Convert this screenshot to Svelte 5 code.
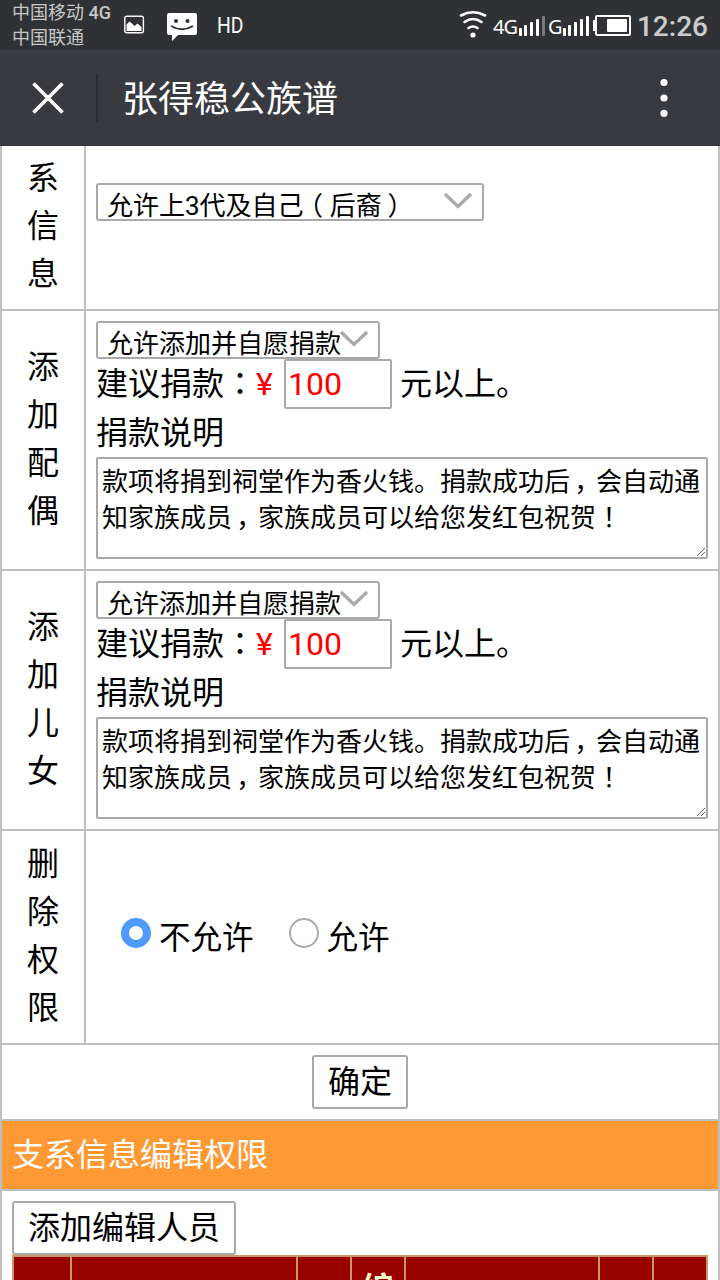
<script lang="ts">
	interface Permission {
		label: string;
		option: string;
		amount: number;
		note: string[];
	}

	const note = ['款项将捐到祠堂作为香火钱。捐款成功后，会自动通', '知家族成员，家族成员可以给您发红包祝贺！'];

	const permissions: Permission[] = [
		{ label: '添加配偶', option: '允许添加并自愿捐款', amount: 100, note },
		{ label: '添加儿女', option: '允许添加并自愿捐款', amount: 100, note }
	];

	const columns = ['', '', '', '编', '', '', ''];

	let allowDelete = $state(false);

	// full-width marks sit in the middle of their em box
	function chunks(text: string) {
		return text.split(/([，：！（）])/).filter((t) => t !== '');
	}

	function markClass(t: string) {
		if (t === '，') return 'comma';
		if (t === '：' || t === '！') return 'centered';
		if (t === '（') return 'open';
		if (t === '）') return 'close';
		return '';
	}
</script>

{#snippet cjk(text: string)}
	{#each chunks(text) as t}<span class={markClass(t)}>{t}</span>{/each}
{/snippet}

{#snippet select(text: string, wide: boolean)}
	<div class="select" class:wide>
		<span class="select-text">{@render cjk(text)}</span>
		<svg class="chevron" width="30" height="18" viewBox="0 0 30 18">
			<path d="M2 2 L15 14.5 L28 2" fill="none" stroke="#aaa" stroke-width="3.4" />
		</svg>
	</div>
{/snippet}

{#snippet label(text: string)}
	<div class="label">
		{#each [...text] as char}
			<span>{char}</span>
		{/each}
	</div>
{/snippet}

{#snippet signal(last: string)}
	<svg class="signal" width="30" height="22" viewBox="0 0 30 22" fill="#fff">
		<rect x="1" y="13" width="3" height="8" rx="1" />
		<rect x="6" y="10" width="3" height="11" rx="1" />
		<rect x="12" y="7" width="3" height="14" rx="1" />
		<rect x="18" y="4" width="3" height="17" rx="1" />
		<rect x="24" y="1" width="3" height="20" rx="1" fill={last} />
	</svg>
{/snippet}

<div class="screen">
	<div class="status">
		<div class="carriers">
			<span>中国移动 <b>4G</b></span>
			<span>中国联通</span>
		</div>
		<svg class="picture" width="22" height="20" viewBox="0 0 22 20">
			<rect x="1.8" y="1.2" width="18.6" height="16.6" rx="2" fill="none" stroke="#fff" stroke-width="1.4" />
			<path d="M3.5 16V9.5L6.5 6.5L9 8.5L11.5 11L14.5 8.5L18.5 12V16Z" fill="#fff" />
		</svg>
		<svg class="message" width="32" height="30" viewBox="0 0 32 30">
			<path d="M3 1H29Q31 1 31 3V21Q31 23 29 23H12L6 29V23H3Q1 23 1 21V3Q1 1 3 1Z" fill="#fff" />
			<circle cx="10" cy="9" r="2" fill="#303134" />
			<circle cx="21.5" cy="9" r="2" fill="#303134" />
			<path d="M5 14Q16 20.5 27 14" fill="none" stroke="#303134" stroke-width="2" />
		</svg>
		<span class="hd">HD</span>
		<div class="tray">
			<svg class="wifi" width="28" height="30" viewBox="0 0 28 30" fill="none" stroke="#fff" stroke-width="2.6" stroke-linecap="round">
				<path d="M2 5.5Q14 -1 26 5.5" />
				<path d="M5.5 12Q14 6 22.5 12" />
				<path d="M9.5 18Q14 15 18.5 18" />
				<circle cx="14" cy="25" r="2.6" fill="#fff" stroke="none" />
			</svg>
			<span class="net first">4G</span>
			{@render signal('#77787a')}
			<span class="net">G</span>
			{@render signal('#fff')}
			<svg class="battery" width="38" height="22" viewBox="0 0 38 22">
				<rect x="0" y="6" width="3" height="11" fill="#fff" />
				<rect x="3" y="2" width="34" height="19" rx="1" fill="none" stroke="#fff" stroke-width="2" />
				<rect x="14" y="5" width="20" height="13" rx="1" fill="#fff" />
			</svg>
			<span class="clock">12:26</span>
		</div>
	</div>

	<header>
		<svg class="close-icon" width="34" height="34" viewBox="0 0 34 34">
			<path d="M2.5 2.5L31.5 31.5M31.5 2.5L2.5 31.5" stroke="#fff" stroke-width="3.6" />
		</svg>
		<i class="divider"></i>
		<h1>张得稳公族谱</h1>
		<svg class="more" width="8" height="40" viewBox="0 0 8 40" fill="#fff">
			<circle cx="4" cy="4.5" r="3.6" />
			<circle cx="4" cy="20" r="3.6" />
			<circle cx="4" cy="35.3" r="3.6" />
		</svg>
	</header>

	<main>
		<div class="row view">
			{@render label('系信息')}
			<div class="cell">{@render select('允许上3代及自己（后裔）', true)}</div>
		</div>

		{#each permissions as p}
			<div class="row add">
				{@render label(p.label)}
				<div class="cell">
					{@render select(p.option, false)}
					<div class="donation">
						<span class="caption">{@render cjk('建议捐款：')}</span>
						<span class="yen">¥</span>
						<input value={p.amount} />
						<span class="unit">元以上。</span>
					</div>
					<div class="line">捐款说明</div>
					<div class="note">
						{#each p.note as text}
							<div>{@render cjk(text)}</div>
						{/each}
						<svg class="grip" width="10" height="10" viewBox="0 0 10 10">
							<path d="M1 9L9 1M5 9L9 5" stroke="#666" stroke-width="1" />
						</svg>
					</div>
				</div>
			</div>
		{/each}

		<div class="row delete">
			{@render label('删除权限')}
			<div class="cell radios">
				<button class="radio" onclick={() => (allowDelete = false)}>
					<i class:checked={!allowDelete}></i>不允许
				</button>
				<button class="radio" onclick={() => (allowDelete = true)}>
					<i class:checked={allowDelete}></i>允许
				</button>
			</div>
		</div>

		<div class="submit"><button class="btn">确定</button></div>
		<h2>支系信息编辑权限</h2>
		<div class="editors">
			<button class="btn">添加编辑人员</button>
			<div class="grid">
				{#each columns as name}
					<div>{name}</div>
				{/each}
			</div>
		</div>
	</main>
</div>

<style>
	:global(body) {
		background: #fff;
	}

	.screen {
		width: 720px;
		height: 1280px;
		overflow: hidden;
		box-sizing: border-box;
		color: #000;
		font-family: Roboto, 'Noto Sans CJK SC', sans-serif;
		font-size: 32px;
		line-height: 48px;
	}

	.screen * {
		box-sizing: border-box;
	}

	svg {
		display: block;
		flex-shrink: 0;
	}

	.comma {
		margin-left: 0.16em;
		margin-right: -0.16em;
	}

	.centered {
		font-family: 'Noto Sans CJK TC', sans-serif;
		line-height: 1;
	}

	.open {
		margin-left: -0.26em;
		margin-right: 0.26em;
	}

	.close {
		margin-left: 0.22em;
		margin-right: -0.22em;
	}

	.status {
		display: flex;
		align-items: center;
		height: 50px;
		padding: 0 12px;
		background: #303134;
		color: #fff;
	}

	.carriers {
		display: flex;
		flex-direction: column;
		width: 111px;
		color: #c8c8c8;
		font-size: 18px;
		line-height: 25px;
		white-space: nowrap;
	}

	.carriers b {
		font-weight: 500;
	}

	.message {
		margin: 3px 0 0 21px;
	}

	.hd {
		margin-left: 19px;
		padding-top: 1px;
		font-size: 22px;
		transform: scaleX(0.88);
		transform-origin: left;
	}

	.tray {
		display: flex;
		align-items: center;
		margin-left: auto;
	}

	.net {
		width: 14px;
		margin-top: 4px;
		font-family: 'Noto Sans', sans-serif;
		font-size: 20px;
		letter-spacing: -1px;
	}

	.net.first {
		width: 25px;
		margin-left: 6px;
	}

	.signal {
		margin-top: 2px;
	}

	.battery {
		margin-left: 1px;
	}

	.clock {
		margin: 3px 0 0 6px;
		color: #ccc;
		font-size: 28px;
		font-weight: 500;
	}

	header {
		display: flex;
		align-items: center;
		height: 96px;
		padding: 0 52px 0 31px;
		background: #393a3f;
		border-bottom: 1px solid #352f38;
		color: #fff;
	}

	.divider {
		width: 2px;
		height: 48px;
		margin: 0 24px 0 31px;
		background: #2d2e32;
	}

	h1 {
		margin: 0;
		padding-top: 5px;
		font-size: 36px;
		font-weight: 400;
	}

	.more {
		margin-left: auto;
	}

	main {
		border: solid #bfbfbf;
		border-width: 0 2px;
	}

	.row {
		display: flex;
		border-bottom: 2px solid #bfbfbf;
	}

	.label {
		display: flex;
		flex-direction: column;
		justify-content: center;
		align-items: center;
		width: 84px;
		border-right: 2px solid #bfbfbf;
		padding-bottom: 3px;
	}

	.cell {
		flex: 1;
		padding: 10px;
	}

	.view {
		height: 165px;
	}

	.view .cell {
		padding-top: 37px;
	}

	.add {
		height: 260px;
	}

	.delete {
		height: 214px;
	}

	.select {
		display: flex;
		width: 284px;
		height: 38px;
		padding-left: 9px;
		border: 2px solid #a9a9a9;
		border-radius: 3px;
		font-size: 26px;
		line-height: 42px;
		white-space: nowrap;
		overflow: hidden;
	}

	.select.wide {
		width: 388px;
	}

	.chevron {
		margin: 7px 9px 0 auto;
	}

	.select:not(.wide) .select-text {
		width: 232px;
	}

	.donation {
		display: flex;
		height: 50px;
		white-space: nowrap;
	}

	.caption {
		width: 160px;
	}

	.caption,
	.unit {
		padding-top: 1px;
	}

	.yen {
		width: 28px;
		padding-top: 1px;
		color: #f00;
	}

	input {
		width: 108px;
		height: 50px;
		margin-right: 8px;
		padding: 0 2px;
		border: 2px solid #a9a9a9;
		border-radius: 2px;
		background: #fff;
		color: #f00;
		font: inherit;
	}

	.line {
		height: 48px;
	}

	.note {
		position: relative;
		width: 612px;
		height: 102px;
		padding: 5px 4px;
		border: 2px solid #a9a9a9;
		border-radius: 2px;
		font-size: 26px;
		line-height: 36px;
		white-space: nowrap;
	}

	.grip {
		position: absolute;
		right: 0;
		bottom: 0;
	}

	.radios {
		display: flex;
		align-items: center;
		padding: 3px 0 0 35px;
		gap: 35px;
	}

	.radio {
		display: flex;
		align-items: center;
		padding: 0;
		border: 0;
		background: none;
		color: inherit;
		font: inherit;
		font-size: 31.5px;
	}

	.radio i {
		width: 30px;
		height: 30px;
		margin: 0 8px 11px 0;
		border: 2px solid #aaa;
		border-radius: 50%;
	}

	.radio i.checked {
		border: 8px solid #4f9bfb;
	}

	.submit {
		height: 76px;
		padding-top: 10px;
		border-bottom: 2px solid #bfbfbf;
		text-align: center;
	}

	.btn {
		display: inline-block;
		height: 54px;
		padding: 0 14px;
		border: 2px solid #a9a9a9;
		border-radius: 3px;
		background: #fff;
		color: #000;
		font: inherit;
		vertical-align: top;
	}

	h2 {
		height: 70px;
		margin: 0;
		padding: 10px;
		border-bottom: 2px solid #bfbfbf;
		background: #ff9933;
		color: #fff;
		font-size: 32px;
		font-weight: 400;
	}

	.editors {
		padding: 10px 10px 0;
	}

	.editors .btn {
		display: block;
	}

	.grid {
		display: grid;
		grid-template-columns: 56px 224px 52px 52px 192px 52px 52px;
		gap: 2px;
		width: 696px;
		height: 100px;
		padding: 2px;
		background: #cc9966;
		color: #ffffcc;
		font-weight: 700;
		text-align: center;
	}

	.grid div {
		padding-top: 8px;
		background: #990000;
	}
</style>
